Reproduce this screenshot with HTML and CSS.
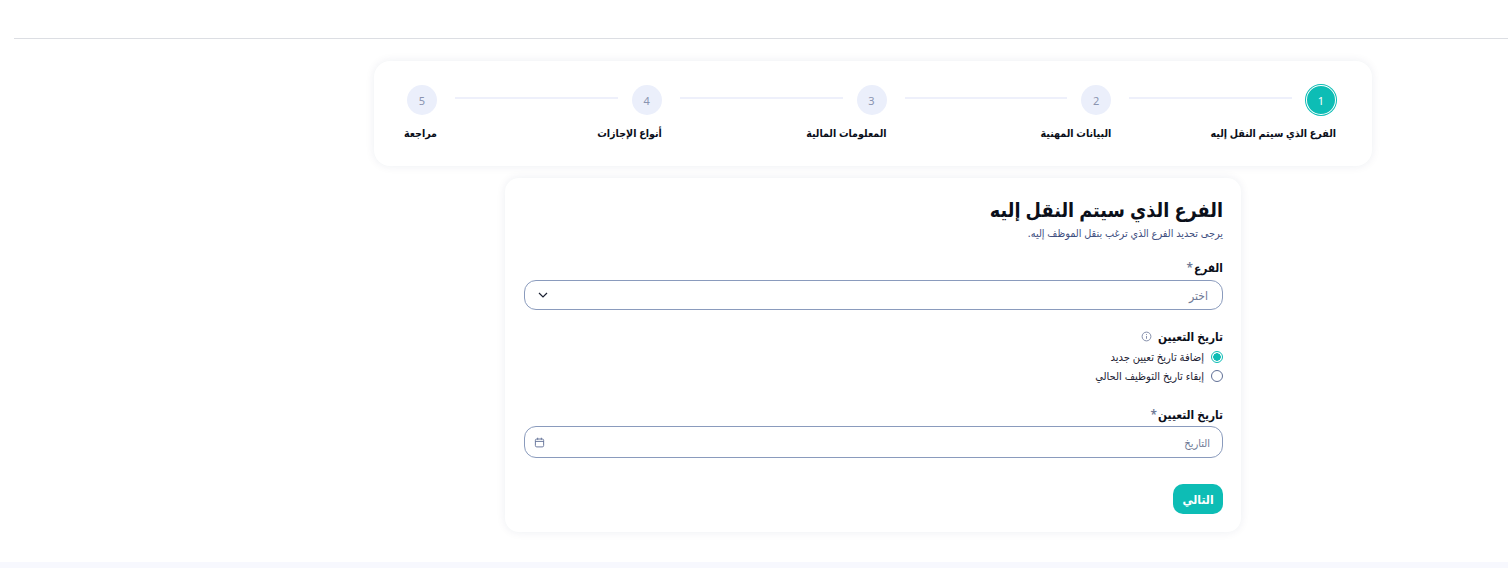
FILE: index.html
```html
<!DOCTYPE html>
<html lang="ar" dir="rtl">
<head>
  <meta charset="UTF-8" />
  <meta name="viewport" content="width=device-width, initial-scale=1" />
  <title>نقل موظف</title>
  <link rel="stylesheet" href="styles.css">
</head>
<body>

  <header class="topbar"></header>

  <main class="content">
    <div class="stepper">
      <div class="step active">
        <div class="step-head"><span class="step-num">1</span><span class="step-line"></span></div>
        <div class="step-label">الفرع الذي سيتم النقل إليه</div>
      </div>
      <div class="step">
        <div class="step-head"><span class="step-num">2</span><span class="step-line"></span></div>
        <div class="step-label">البيانات المهنية</div>
      </div>
      <div class="step">
        <div class="step-head"><span class="step-num">3</span><span class="step-line"></span></div>
        <div class="step-label">المعلومات المالية</div>
      </div>
      <div class="step">
        <div class="step-head"><span class="step-num">4</span><span class="step-line"></span></div>
        <div class="step-label">أنواع الإجازات</div>
      </div>
      <div class="step last">
        <div class="step-head"><span class="step-num">5</span></div>
        <div class="step-label">مراجعة</div>
      </div>
    </div>

    <form class="form-card">
      <h1>الفرع الذي سيتم النقل إليه</h1>
      <p class="subtitle">يرجى تحديد الفرع الذي ترغب بنقل الموظف إليه.</p>

      <div class="field branch-field">
        <label class="field-label">الفرع<span class="star">*</span></label>
        <div class="input select-input">
          <span class="placeholder">اختر</span>
          <svg class="chevron" width="12" height="12" viewBox="0 0 12 12" fill="none" stroke="#1c2233" stroke-width="1.2"><path d="M2 4l4 4 4-4"/></svg>
        </div>
      </div>

      <div class="field radio-field">
        <div class="field-label">
          تاريخ التعيين
          <svg class="info" width="11" height="11" viewBox="0 0 12 12" fill="none" stroke="#7b86a3"><circle cx="6" cy="6" r="4.8"/><path d="M6 5.5v3M6 3.4v1"/></svg>
        </div>
        <label class="radio-row"><span class="radio checked"></span>إضافة تاريخ تعيين جديد</label>
        <label class="radio-row"><span class="radio"></span>إبقاء تاريخ التوظيف الحالي</label>
      </div>

      <div class="field date-field">
        <label class="field-label">تاريخ التعيين<span class="star">*</span></label>
        <div class="input date-input">
          <span class="placeholder">التاريخ</span>
          <svg class="calendar" width="11" height="11" viewBox="0 0 12 12" fill="none" stroke="#5f6f96"><rect x="1.5" y="2.2" width="9" height="8.6" rx="1.5"/><path d="M1.5 4.8h9M4 .8v2.2M8 .8v2.2"/></svg>
        </div>
      </div>

      <div class="actions">
        <button type="button" class="next-btn">التالي</button>
      </div>
    </form>
  </main>

  <footer class="footer-strip"></footer>

</body>
</html>
```
FILE: styles.css
```css
* {
  box-sizing: border-box;
}
html, body {
  margin: 0;
  height: 568px;
  overflow: hidden;
}
body {
  background-color: #fff;
  color: #0b0f1a;
  font-family: "Noto Sans", "DejaVu Sans Condensed", "DejaVu Sans", sans-serif;
  font-stretch: condensed;
  display: flex;
  flex-direction: column;
}
.topbar {
  height: 39px;
  margin-left: 14px;
  border-bottom: 1px solid #dcdee3;
}
.content {
  flex: 1;
  padding: 22px 136px 0 374px;
  display: flex;
  flex-direction: column;
  align-items: center;
}
.stepper {
  width: 998px;
  height: 105px;
  padding: 24px 36px 0 33px;
  display: flex;
  background-color: #fff;
  border-radius: 16px;
  box-shadow: 0 0 10px rgba(30, 40, 90, 0.08);
}
.step {
  flex: 1;
  display: flex;
  flex-direction: column;
  align-items: flex-start;
}
.step.last {
  flex: none;
  width: 30px;
}
.step-head {
  display: flex;
  width: 100%;
  align-items: flex-start;
  justify-content: flex-start;
}
.step-num {
  width: 30px;
  height: 30px;
  flex: none;
  border-radius: 50%;
  background-color: #ebeffb;
  color: #8a94b0;
  font-size: 11px;
  display: flex;
  align-items: center;
  justify-content: center;
}
.step.active .step-num {
  background-color: #0dbdb5;
  color: #fff;
  box-shadow: inset 0 0 0 1px #fff, 0 0 0 1px #0dbdb5;
}
.step-line {
  flex: 1;
  height: 2px;
  margin: 12px 14px 0 18px;
  background-color: #eef0fb;
}
.step-label {
  margin-top: 9px;
  font-size: 10.6px;
  font-weight: 700;
  line-height: 18px;
  white-space: nowrap;
}
.form-card {
  width: 736px;
  height: 354px;
  margin-top: 12px;
  padding: 18px 18px 0 19px;
  background-color: #fff;
  border-radius: 14px;
  box-shadow: 0 0 10px rgba(30, 40, 90, 0.08);
}
h1 {
  margin: 0;
  font-size: 19.7px;
  font-weight: 700;
  line-height: 28px;
}
.subtitle {
  margin: 0;
  font-size: 10.8px;
  line-height: 18px;
  color: #3f4f7f;
}
.field-label {
  display: block;
  padding-bottom: 2px;
  font-size: 11.8px;
  font-weight: 600;
  line-height: 16px;
}
.star {
  margin-right: 1px;
  color: #6f7a96;
}
.input {
  display: flex;
  align-items: center;
  justify-content: space-between;
  margin-top: 3px;
  padding: 0 14px 0 12px;
  border: 1px solid #8a9bbd;
  border-radius: 12px;
  background-color: #fff;
}
.placeholder {
  font-size: 12px;
  color: #6f7a96;
}
.branch-field {
  margin-top: 17px;
}
.select-input {
  height: 30px;
}
.radio-field {
  margin-top: 18px;
}
.info {
  margin-right: 3px;
  vertical-align: -1px;
}
.radio-row {
  display: flex;
  align-items: center;
  gap: 7px;
  height: 19px;
  font-size: 11.1px;
  color: #1c2233;
}
.radio-row:first-of-type {
  margin-top: 1px;
}
.radio {
  width: 12px;
  height: 12px;
  border: 1px solid #5f6f96;
  border-radius: 50%;
  flex: none;
}
.radio.checked {
  border-color: #0dbdb5;
  background: radial-gradient(circle, #0dbdb5 0 3.5px, #fff 4px);
}
.date-field {
  margin-top: 21px;
}
.date-input {
  height: 32px;
  margin-top: 2px;
  padding: 0 12px 0 9px;
}
.date-input .placeholder {
  font-size: 11px;
}
.actions {
  display: flex;
  margin-top: 26px;
}
.next-btn {
  width: 50px;
  height: 30px;
  border: none;
  border-radius: 10px;
  background-color: #0dbdb5;
  color: #fff;
  font-family: inherit;
  font-stretch: inherit;
  font-size: 12px;
  font-weight: 700;
  cursor: pointer;
}
.footer-strip {
  height: 6px;
  background-color: #f7f8fe;
}
```
